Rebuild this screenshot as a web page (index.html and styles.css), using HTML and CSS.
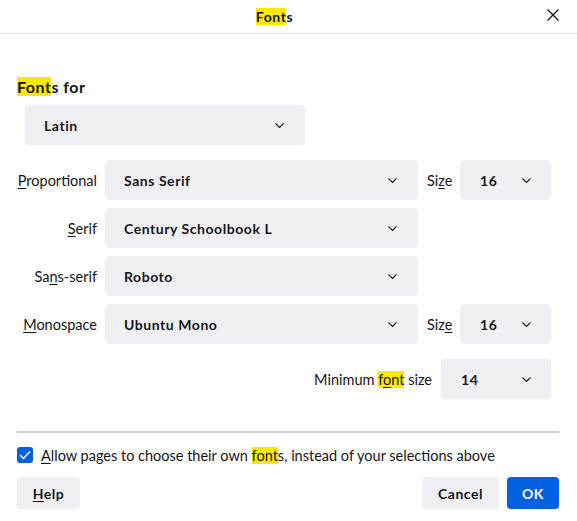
FILE: index.html
```html
<!DOCTYPE html>
<html lang="en">
<head>
<meta charset="utf-8">
<title>Fonts</title>
<link rel="stylesheet" href="styles.css">
</head>
<body>
<div class="dialog">
  <header class="header">
    <div class="title"><mark>Font</mark>s</div>
    <button class="close" aria-label="Close">
      <svg width="12" height="12" viewBox="0 0 12 12"><path d="M0.5 0.5 L11.5 11.5 M11.5 0.5 L0.5 11.5" stroke="#15141a" stroke-width="1.3" fill="none"/></svg>
    </button>
  </header>

  <main class="content">
    <h2 class="heading"><mark>Font</mark>s for</h2>
    <div class="select latin"><span>Latin</span><svg class="chev" width="9" height="5" viewBox="0 0 9 5"><path d="M0.5 0.5 L4.5 4.5 L8.5 0.5" stroke="#15141a" stroke-width="1.1" fill="none"/></svg></div>

    <div class="grid">
      <label class="lbl"><span><u>P</u>roportional</span></label>
      <div class="select"><span>Sans Serif</span><svg class="chev" width="9" height="5" viewBox="0 0 9 5"><path d="M0.5 0.5 L4.5 4.5 L8.5 0.5" stroke="#15141a" stroke-width="1.1" fill="none"/></svg></div>
      <label class="lbl size-lbl"><span>Si<u>z</u>e</span></label>
      <div class="select small"><span>16</span><svg class="chev" width="9" height="5" viewBox="0 0 9 5"><path d="M0.5 0.5 L4.5 4.5 L8.5 0.5" stroke="#15141a" stroke-width="1.1" fill="none"/></svg></div>

      <label class="lbl"><span><u>S</u>erif</span></label>
      <div class="select"><span>Century Schoolbook L</span><svg class="chev" width="9" height="5" viewBox="0 0 9 5"><path d="M0.5 0.5 L4.5 4.5 L8.5 0.5" stroke="#15141a" stroke-width="1.1" fill="none"/></svg></div>
      <div class="empty"></div>
      <div class="empty"></div>

      <label class="lbl"><span>Sa<u>n</u>s-serif</span></label>
      <div class="select"><span>Roboto</span><svg class="chev" width="9" height="5" viewBox="0 0 9 5"><path d="M0.5 0.5 L4.5 4.5 L8.5 0.5" stroke="#15141a" stroke-width="1.1" fill="none"/></svg></div>
      <div class="empty"></div>
      <div class="empty"></div>

      <label class="lbl"><span><u>M</u>onospace</span></label>
      <div class="select"><span>Ubuntu Mono</span><svg class="chev" width="9" height="5" viewBox="0 0 9 5"><path d="M0.5 0.5 L4.5 4.5 L8.5 0.5" stroke="#15141a" stroke-width="1.1" fill="none"/></svg></div>
      <label class="lbl size-lbl"><span>Siz<u>e</u></span></label>
      <div class="select small"><span>16</span><svg class="chev" width="9" height="5" viewBox="0 0 9 5"><path d="M0.5 0.5 L4.5 4.5 L8.5 0.5" stroke="#15141a" stroke-width="1.1" fill="none"/></svg></div>
    </div>

    <div class="minrow">
      <label class="lbl"><span>Minimum <mark>f<u>o</u>nt</mark> size</span></label>
      <div class="select min"><span>14</span><svg class="chev" width="9" height="5" viewBox="0 0 9 5"><path d="M0.5 0.5 L4.5 4.5 L8.5 0.5" stroke="#15141a" stroke-width="1.1" fill="none"/></svg></div>
    </div>

    <hr class="sep">

    <div class="check-row">
      <span class="checkbox"><svg width="12" height="10" viewBox="0 0 12 10"><path d="M1 5 L4.5 8.5 L11 1.5" stroke="#fff" stroke-width="1.5" fill="none"/></svg></span>
      <span class="check-text"><u>A</u>llow pages to choose their own <mark>font</mark>s, instead of your selections above</span>
    </div>

    <div class="buttons">
      <button class="btn help"><u>H</u>elp</button>
      <div class="spacer"></div>
      <button class="btn cancel">Cancel</button>
      <button class="btn primary">OK</button>
    </div>
  </main>
</div>
</body>
</html>
```

FILE: styles.css
```css
* { box-sizing: border-box; }
html, body { margin: 0; padding: 0; background: #fff; }
body {
  font-family: Lato, "Noto Sans", sans-serif;
  font-size: 14.5px;
  color: #15141a;
}
mark { background: #ffe900; color: inherit; }
u { text-decoration: underline; text-underline-offset: 2px; }

.header {
  height: 34px;
  border-bottom: 1px solid #e0e0e6;
  display: flex;
  align-items: center;
}
.title {
  flex: 1;
  text-align: center;
  font-weight: 700;
  font-size: 14px;
  letter-spacing: 0.6px;
  padding-left: 2px;
}
.close {
  width: 30px;
  height: 33px;
  border: 0;
  background: none;
  padding: 0 0 3px 0;
  display: flex;
  align-items: center;
  justify-content: flex-start;
}

.content {
  padding: 0 18px 0 17px;
}
.heading {
  margin: 43px 0 0 0;
  font-size: 16px;
  line-height: 19px;
  font-weight: 700;
  letter-spacing: 0.5px;
}
.select {
  background: #f0f0f4;
  border-radius: 4px;
  height: 40px;
  display: flex;
  align-items: center;
  justify-content: space-between;
  padding: 0 21px 0 19px;
  font-weight: 700;
  font-size: 14px;
  letter-spacing: 0.55px;
}
.chev { flex: none; }
.latin {
  margin: 9px 0 0 8px;
  width: 280px;
}
.grid {
  margin-top: 15px;
  display: grid;
  grid-template-columns: 88px 313px 42px 91px;
  grid-auto-rows: 40px;
  row-gap: 8px;
}
.lbl {
  display: flex;
  align-items: center;
  justify-content: flex-end;
  white-space: nowrap;
  padding-right: 8px;
}
.size-lbl { justify-content: flex-start; padding: 0 0 0 9px; }
.select.small { padding-left: 20px; padding-right: 20px; }
.minrow {
  margin-top: 15px;
  display: flex;
  justify-content: flex-end;
  padding-right: 8px;
  height: 40px;
}
.minrow .lbl { padding-right: 9px; }
.select.min { width: 110px; padding-left: 20px; padding-right: 20px; }

.sep {
  margin: 32px 0 0 0;
  border: 0;
  height: 2px;
  background: #cfcfd8;
}
.check-row {
  margin-top: 14px;
  display: flex;
  align-items: center;
  gap: 8px;
  height: 16px;
}
.checkbox {
  width: 16px;
  height: 16px;
  border-radius: 3px;
  background: #0061e0;
  display: flex;
  align-items: center;
  justify-content: center;
}
.buttons {
  margin-top: 14px;
  display: flex;
  gap: 8px;
}
.spacer { flex: 1; }
.btn {
  height: 32px;
  border: 0;
  border-radius: 4px;
  background: #f0f0f4;
  color: #15141a;
  font-family: inherit;
  font-size: 14px;
  font-weight: 700;
  letter-spacing: 0.5px;
  padding: 0;
}
.btn.help { width: 63px; }
.btn.cancel { width: 77px; }
.btn.primary { background: #0061e0; color: #fff; width: 52px; }
```
